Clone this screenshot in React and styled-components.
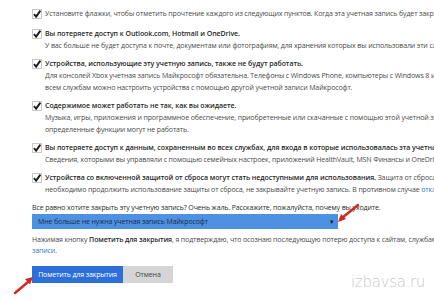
import styled, { createGlobalStyle } from 'styled-components';

const GlobalStyle = createGlobalStyle`
  html, body {
    margin: 0;
    padding: 0;
    background: #fff;
  }
  #root {
    width: 434px;
    height: 300px;
    overflow: hidden;
    position: relative;
  }
`;

const items = [
  {
    title: 'Установите флажки, чтобы отметить прочтение каждого из следующих пунктов. Когда эта учетная запись будет закрыта, вы потеряете',
    plain: true,
    lines: [],
  },
  {
    title: 'Вы потеряете доступ к Outlook.com, Hotmail и OneDrive.',
    lines: ['У вас больше не будет доступа к почте, документам или фотографиям, для хранения которых вы использовали эти службы.'],
  },
  {
    title: 'Устройства, использующие эту учетную запись, также не будут работать.',
    lines: [
      'Для консолей Xbox учетная запись Майкрософт обязательна. Телефоны с Windows Phone, компьютеры с Windows 8 и другие',
      'всем службам можно настроить устройства с помощью другой учетной записи Майкрософт.',
    ],
  },
  {
    title: 'Содержимое может работать не так, как вы ожидаете.',
    lines: [
      'Музыка, игры, приложения и программное обеспечение, приобретенные или скачанные с помощью этой учетной записи,',
      'определенные функции могут не работать.',
    ],
  },
  {
    title: 'Вы потеряете доступ к данным, сохраненным во всех службах, для входа в которые использовалась эта учетная запись.',
    lines: ['Сведения, которыми вы управляли с помощью семейных настроек, приложений HealthVault, MSN Финансы и OneDrive,'],
  },
];

const Check = () => (
  <CheckIcon viewBox="0 0 10 10">
    <rect x="0.5" y="0.5" width="9" height="9" fill="#fff" stroke="#c9c9c9" />
    <path d="M2 5.2 L4.1 7.6 L8.4 1.6" fill="none" stroke="#1e1e1e" strokeWidth="1.9" />
  </CheckIcon>
);

const Item = ({ title, plain, lines, first }) => (
  <Row $first={first}>
    <Check />
    <Body>
      <Title $plain={plain}>{title}</Title>
      {lines.map((l) => (
        <Line key={l}>{l}</Line>
      ))}
    </Body>
  </Row>
);

const App = () => (
  <>
    <GlobalStyle />
    <Page>
      {items.map((it, i) => (
        <Item key={it.title} first={i === 0} {...it} />
      ))}
      <Row>
        <Check />
        <Body>
          <Title>
            Устройства со включенной защитой от сброса могут стать недоступными для использования.
            <Normal> Защита от сброса помогает защитить устройство.</Normal>
          </Title>
          <Line>
            необходимо продолжить использование защиты от сброса, не закрывайте учетную запись. В противном случае <Link>отключите ее</Link>
          </Line>
        </Body>
      </Row>
      <Question>Все равно хотите закрыть эту учетную запись? Очень жаль. Расскажите, пожалуйста, почему вы уходите.</Question>
      <Select>
        <span>Мне больше не нужна учетная запись Майкрософт</span>
        <Caret>▾</Caret>
      </Select>
      <Note>
        Нажимая кнопку <b>Пометить для закрытия</b>, я подтверждаю, что осознаю последующую потерю доступа к сайтам, службам и данным
        <br />
        <Link>записи.</Link>
      </Note>
      <Buttons>
        <Button $primary>Пометить для закрытия</Button>
        <Button>Отмена</Button>
      </Buttons>
    </Page>
    <Arrow viewBox="0 0 24 20" $left={336} $top={203}>
      <path d="M22 2 L6 15" stroke="#d0281e" strokeWidth="2.4" strokeLinecap="round" />
      <path d="M2 19 L5 11 L10 16 Z" fill="#d0281e" />
    </Arrow>
    <Arrow viewBox="0 0 24 20" $left={12} $top={275}>
      <path d="M3 18 L16 7" stroke="#d0281e" strokeWidth="2.4" strokeLinecap="round" />
      <path d="M21 2 L13 4 L18 9.5 Z" fill="#d0281e" />
    </Arrow>
    <Watermark>izbavsa.ru</Watermark>
  </>
);

const Page = styled.div`
  width: 700px;
  padding: 8px 0 0 32px;
  font-family: "Open Sans", "Liberation Sans", sans-serif;
  font-size: 7px;
  letter-spacing: -0.12px;
  line-height: 12px;
  color: #4a4a4a;
  white-space: nowrap;
`;

const Row = styled.div`
  display: flex;
  align-items: flex-start;
  gap: 3px;
  margin-bottom: ${(p) => (p.$first ? '8px' : '6px')};
`;

const CheckIcon = styled.svg`
  width: 10px;
  height: 10px;
  margin-top: 1px;
  flex: none;
`;

const Body = styled.div`
  display: flex;
  flex-direction: column;
`;

const Title = styled.div`
  font-weight: ${(p) => (p.$plain ? 400 : 600)};
  letter-spacing: ${(p) => (p.$plain ? '-0.12px' : '-0.06px')};
  color: ${(p) => (p.$plain ? '#4a4a4a' : '#262626')};
`;

const Normal = styled.span`
  font-weight: 400;
  letter-spacing: -0.12px;
  color: #4a4a4a;
`;

const Line = styled.div``;

const Link = styled.span`
  color: #2f78c8;
`;

const Question = styled.div`
  color: #2a2a2a;
`;

const Select = styled.div`
  width: 296px;
  height: 15px;
  background: #4d91e3;
  display: flex;
  align-items: center;
  justify-content: space-between;
  padding: 0 4px 0 6px;
  color: #1d2a44;
`;

const Caret = styled.span`
  font-size: 7px;
  color: #1a1a1a;
`;

const Note = styled.div`
  margin-top: 5px;
  line-height: 11px;
  b {
    font-weight: 600;
    color: #2a2a2a;
  }
`;

const Buttons = styled.div`
  display: flex;
  margin-top: 10px;
`;

const Button = styled.div`
  height: 17px;
  display: flex;
  align-items: center;
  justify-content: center;
  width: ${(p) => (p.$primary ? '91px' : '50px')};
  background: ${(p) => (p.$primary ? '#2c6fd8' : '#d5d5d5')};
  color: ${(p) => (p.$primary ? '#fff' : '#444')};
`;

const Arrow = styled.svg`
  position: absolute;
  left: ${(p) => p.$left}px;
  top: ${(p) => p.$top}px;
  width: 24px;
  height: 20px;
`;

const Watermark = styled.div`
  position: absolute;
  left: 351px;
  top: 273px;
  font-family: "DejaVu Sans", "Liberation Sans", sans-serif;
  font-weight: 300;
  font-size: 15px;
  letter-spacing: -0.3px;
  color: #c9c9c9;
`;

export default App;
